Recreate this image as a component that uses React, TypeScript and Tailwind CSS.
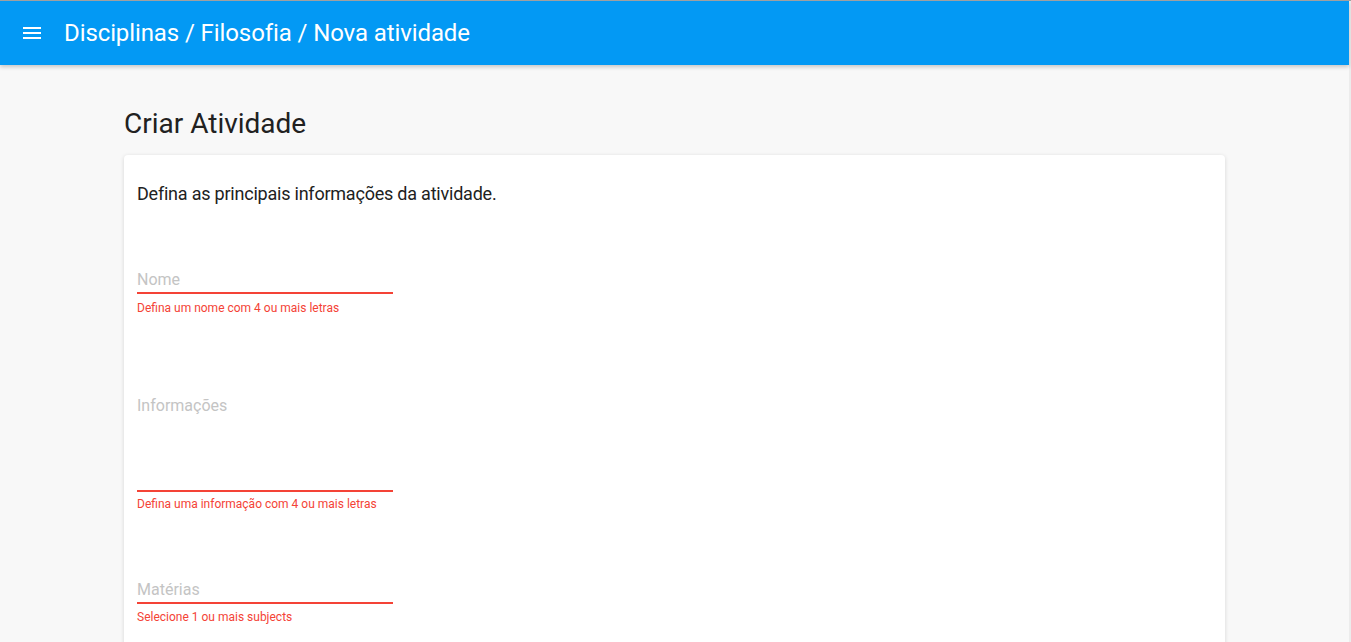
const campos = [
  { label: "Nome", erro: "Defina um nome com 4 ou mais letras", alto: false, mt: "mt-[64px]", emt: "mt-[6px]" },
  { label: "Informações", erro: "Defina uma informação com 4 ou mais letras", alto: true, mt: "mt-[80px]", emt: "mt-1" },
  { label: "Matérias", erro: "Selecione 1 ou mais subjects", alto: false, mt: "mt-[68px]", emt: "mt-[5px]" },
];

function MenuIcon() {
  return (
    <svg width="24" height="24" viewBox="0 0 24 24" fill="#fff">
      <path d="M3 18h18v-2H3v2zm0-5h18v-2H3v2zm0-7v2h18V6H3z" />
    </svg>
  );
}

export default function App() {
  return (
    <div
      className="h-[642px] overflow-hidden flex bg-[#f8f8f8] border-t border-[#a0a0a0]"
      style={{ fontFamily: "Roboto, 'Liberation Sans', sans-serif" }}
    >
      <div className="flex-1 flex flex-col">
        <header className="h-16 shrink-0 bg-[#0399f4] flex items-center pl-5 shadow-[0_2px_4px_rgba(0,0,0,0.2)] relative z-10">
          <MenuIcon />
          <h1 className="ml-5 text-2xl leading-8 tracking-[-0.1px] text-white">
            Disciplinas / Filosofia / Nova atividade
          </h1>
        </header>

        <main className="w-[1101px] mx-auto">
          <h2 className="mt-[41px] text-[28px] leading-9 text-[#212121]">Criar Atividade</h2>
          <div className="mt-[13px] bg-white rounded-sm shadow-[0_1px_4px_rgba(0,0,0,0.14)] pl-[13px] pt-[27px] pb-10 min-h-[600px]">
            <p className="text-lg leading-6 tracking-[-0.22px] text-[#212121]">
              Defina as principais informações da atividade.
            </p>

            {campos.map((c) => (
              <div key={c.label} className={`${c.mt} w-64`}>
                <div
                  className={`border-b-2 border-[#f44336] pb-[2px] text-base leading-5 text-[#c4c4c4] ${
                    c.alto ? "h-[96px]" : ""
                  }`}
                >
                  {c.label}
                </div>
                <div className={`${c.emt} text-xs leading-4 text-[#f44336]`}>{c.erro}</div>
              </div>
            ))}
          </div>
        </main>
      </div>
      <div className="w-[2px] bg-[#ececec]" />
    </div>
  );
}
